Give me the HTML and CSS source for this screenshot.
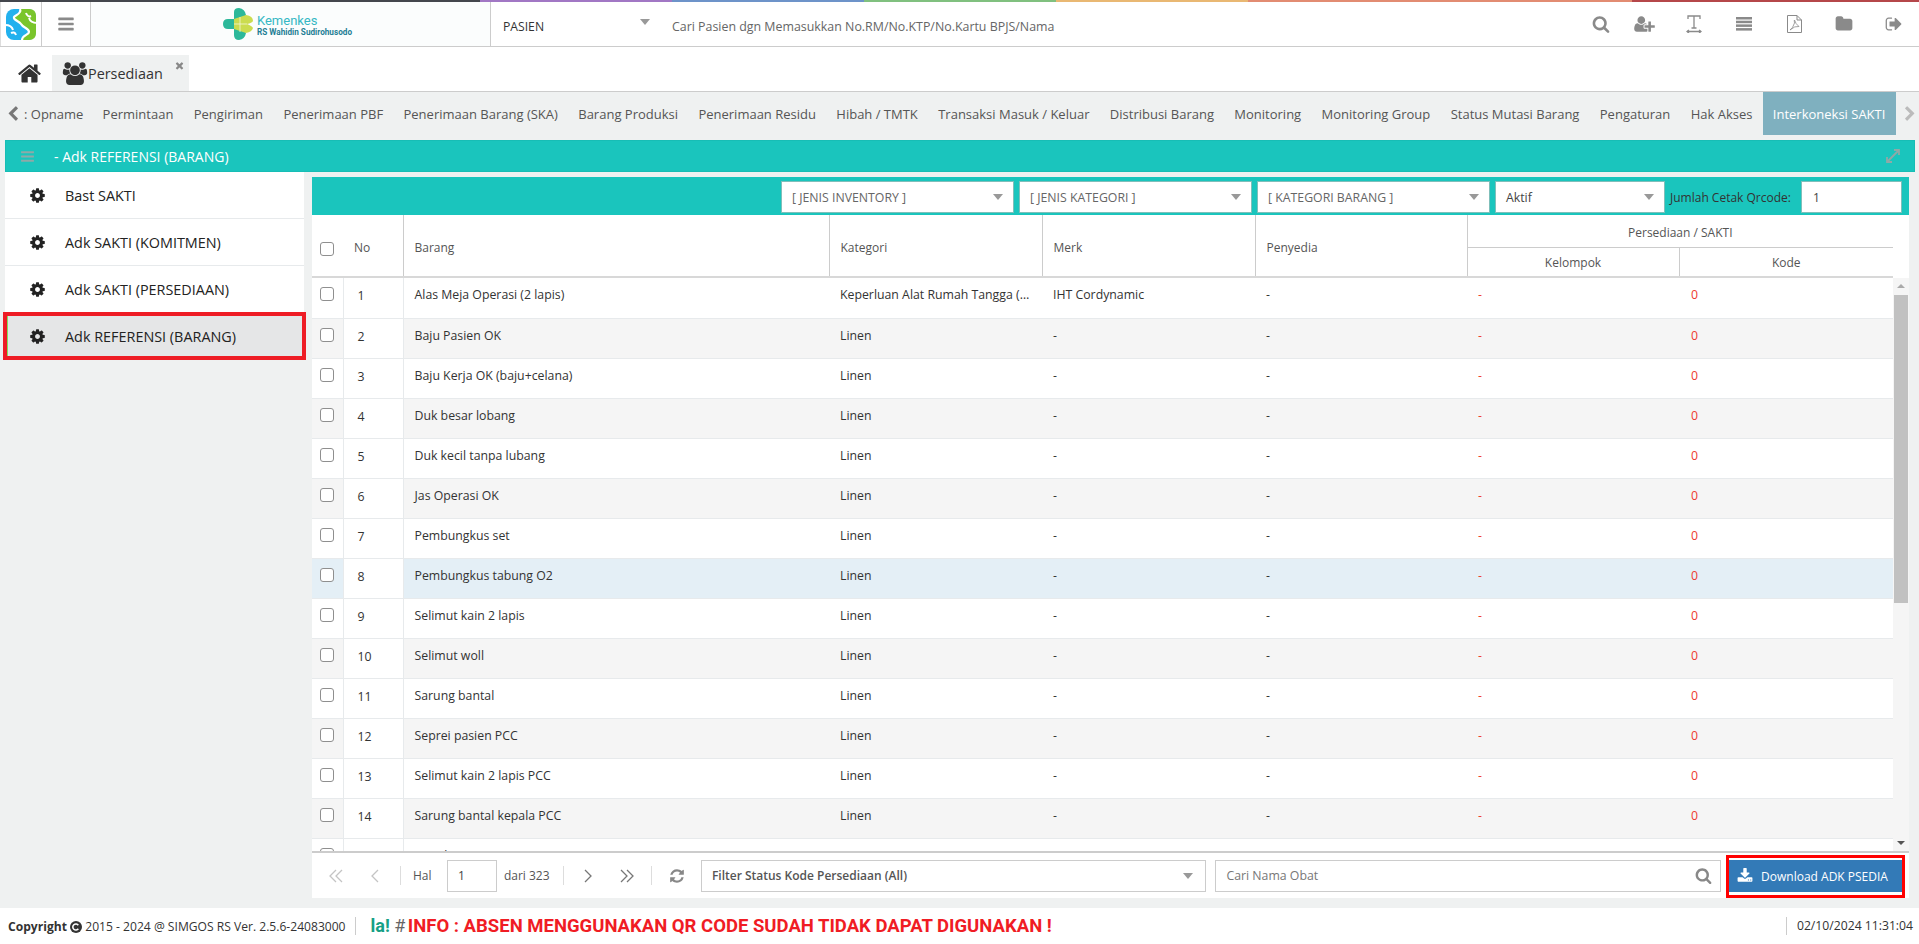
FILE: index.html
```html
<!DOCTYPE html>
<html lang="en">
<head>
    <meta charset="UTF-8">
    <title>SIMGOS RS - Persediaan</title>
    <link rel="stylesheet" href="styles.css">
</head>
<body>
    <svg class="icon_defs" xmlns="http://www.w3.org/2000/svg">
        <symbol id="i-bars" viewBox="0 0 1792 1792"><path d="M1664 1344v128q0 26-19 45t-45 19h-1408q-26 0-45-19t-19-45v-128q0-26 19-45t45-19h1408q26 0 45 19t19 45zm0-512v128q0 26-19 45t-45 19h-1408q-26 0-45-19t-19-45v-128q0-26 19-45t45-19h1408q26 0 45 19t19 45zm0-512v128q0 26-19 45t-45 19h-1408q-26 0-45-19t-19-45v-128q0-26 19-45t45-19h1408q26 0 45 19t19 45z"/></symbol>
        <symbol id="i-search" viewBox="0 0 1792 1792"><path d="M1216 832q0-185-131.500-316.500t-316.500-131.500-316.500 131.500-131.500 316.500 131.500 316.500 316.500 131.500 316.500-131.500 131.500-316.500zm512 832q0 52-38 90t-90 38q-54 0-90-38l-343-342q-179 124-399 124-143 0-273.500-55.500t-225-150-150-225-55.500-273.500 55.500-273.500 150-225 225-150 273.500-55.500 273.500 55.500 225 150 150 225 55.500 273.500q0 220-124 399l343 343q37 37 37 90z"/></symbol>
        <symbol id="i-home" viewBox="0 0 1792 1792"><path d="M1472 992v480q0 26-19 45t-45 19h-384v-384h-256v384h-384q-26 0-45-19t-19-45v-480q0-1 .5-3t.5-3l575-474 575 474q1 2 1 6zm223-69l-62 74q-8 9-21 11h-3q-13 0-21-7l-692-577-692 577q-12 8-24 7-13-2-21-11l-62-74q-8-10-7-23.500t11-21.500l719-599q32-26 76-26t76 26l244 204v-195q0-14 9-23t23-9h192q14 0 23 9t9 23v408l219 182q10 8 11 21.500t-7 23.500z"/></symbol>
        <symbol id="i-cog" viewBox="0 0 1792 1792"><path d="M1152 896q0-106-75-181t-181-75-181 75-75 181 75 181 181 75 181-75 75-181zm512-109v222q0 12-8 23t-20 13l-185 28q-19 54-39 91 35 50 107 138 10 12 10 25t-9 23q-27 37-99 108t-94 71q-12 0-26-9l-138-108q-44 23-91 38-16 136-29 186-7 28-36 28h-222q-14 0-24.500-8.500t-11.500-21.500l-28-184q-49-16-90-37l-141 107q-10 9-25 9-14 0-25-11-126-114-165-168-7-10-7-23 0-12 8-23 15-21 51-66.500t54-70.500q-27-50-41-99l-183-27q-13-2-21-12.500t-8-23.500v-222q0-12 8-23t19-13l186-28q14-46 39-92-40-57-107-138-10-12-10-24 0-10 9-23 26-36 98.500-107.500t94.500-71.500q13 0 26 10l138 107q44-23 91-38 16-136 29-186 7-28 36-28h222q14 0 24.500 8.500t11.500 21.500l28 184q49 16 90 37l142-107q9-9 24-9 13 0 25 10 129 119 165 170 7 8 7 22 0 12-8 23-15 21-51 66.500t-54 70.500q26 50 41 98l183 28q13 2 21 12.500t8 23.500z"/></symbol>
        <symbol id="i-users" viewBox="0 0 2048 1792"><path d="M657 896q-162 5-265 128h-134q-82 0-138-40.500t-56-118.500q0-353 124-353 6 0 43.500 21t97.500 42.500 119 21.500q67 0 133-23-5 37-5 66 0 139 81 256zm1071 637q0 120-73 189.500t-194 69.500h-874q-121 0-194-69.500t-73-189.500q0-53 3.500-103.500t14-109 26.500-108.500 43-97.500 62-81 85.500-53.500 111.500-20q10 0 43 21.500t73 48 107 48 135 21.500 135-21.500 107-48 73-48 43-21.500q61 0 111.500 20t85.500 53.500 62 81 43 97.500 26.500 108.500 14 109 3.500 103.500zm-1024-1277q0 106-75 181t-181 75-181-75-75-181 75-181 181-75 181 75 75 181zm704 384q0 159-112.500 271.500t-271.500 112.500-271.500-112.500-112.500-271.500 112.500-271.500 271.500-112.500 271.500 112.500 112.500 271.500zm576 225q0 78-56 118.500t-138 40.500h-134q-103-123-265-128 81-117 81-256 0-29-5-66 66 23 133 23 59 0 119-21.500t97.500-42.500 43.500-21q124 0 124 353zm-128-609q0 106-75 181t-181 75-181-75-75-181 75-181 181-75 181 75 75 181z"/></symbol>
        <symbol id="i-times" viewBox="0 0 1792 1792"><path d="M1490 1322q0 40-28 68l-136 136q-28 28-68 28t-68-28l-294-294-294 294q-28 28-68 28t-68-28l-136-136q-28-28-28-68t28-68l294-294-294-294q-28-28-28-68t28-68l136-136q28-28 68-28t68 28l294 294 294-294q28-28 68-28t68 28l136 136q28 28 28 68t-28 68l-294 294 294 294q28 28 28 68z"/></symbol>
        <symbol id="i-left" viewBox="0 0 1792 1792"><path d="M1427 301l-531 531 531 531q19 19 19 45t-19 45l-166 166q-19 19-45 19t-45-19l-742-742q-19-19-19-45t19-45l742-742q19-19 45-19t45 19l166 166q19 19 19 45t-19 45z"/></symbol>
        <symbol id="i-right" viewBox="0 0 1792 1792"><path d="M1363 877l-742 742q-19 19-45 19t-45-19l-166-166q-19-19-19-45t19-45l531-531-531-531q-19-19-19-45t19-45l166-166q19-19 45-19t45 19l742 742q19 19 19 45t-19 45z"/></symbol>
        <symbol id="i-signout" viewBox="0 0 1792 1792"><path d="M704 1440q0 4 1 20t.5 26.500-3 23.500-10 19.500-20.500 6.500h-320q-119 0-203.500-84.500t-84.500-203.500v-704q0-119 84.500-203.500t203.500-84.500h320q13 0 22.500 9.500t9.500 22.500q0 4 1 20t.5 26.500-3 23.500-10 19.500-20.500 6.500h-320q-66 0-113 47t-47 113v704q0 66 47 113t113 47h312l11.500 1 11.500 3 8 5.500 7 9 2 13.500zm928-544q0 26-19 45l-544 544q-19 19-45 19t-45-19-19-45v-288h-448q-26 0-45-19t-19-45v-384q0-26 19-45t45-19h448v-288q0-26 19-45t45-19 45 19l544 544q19 19 19 45z"/></symbol>
        <symbol id="i-folder" viewBox="0 0 1792 1792"><path d="M1728 608v704q0 92-66 158t-158 66h-1216q-92 0-158-66t-66-158v-960q0-92 66-158t158-66h320q92 0 158 66t66 158v32h672q92 0 158 66t66 158z"/></symbol>
        <symbol id="i-refresh" viewBox="0 0 1792 1792"><path d="M1639 1056q0 5-1 7-64 268-268 434.500t-478 166.500q-146 0-282.500-55t-243.500-157l-129 129q-19 19-45 19t-45-19-19-45v-448q0-26 19-45t45-19h448q26 0 45 19t19 45-19 45l-137 137q71 66 161 102t187 36q134 0 250-65t186-179q11-17 53-117 8-23 30-23h192q13 0 22.500 9.500t9.500 22.500zm25-800v448q0 26-19 45t-45 19h-448q-26 0-45-19t-19-45 19-45l138-138q-148-137-349-137-134 0-250 65t-186 179q-11 17-53 117-8 23-30 23h-199q-13 0-22.500-9.500t-9.500-22.500v-7q65-268 270-434.500t480-166.500q146 0 284 55.500t245 156.500l130-129q19-19 45-19t45 19 19 45z"/></symbol>
        <symbol id="i-download" viewBox="0 0 1792 1792"><path d="M1344 1344q0-26-19-45t-45-19-45 19-19 45 19 45 45 19 45-19 19-45zm256 0q0-26-19-45t-45-19-45 19-19 45 19 45 45 19 45-19 19-45zm128-224v320q0 40-28 68t-68 28h-1472q-40 0-68-28t-28-68v-320q0-40 28-68t68-28h465l135 136q58 56 136 56t136-56l136-136h464q40 0 68 28t28 68zm-325-569q17 41-14 70l-448 448q-18 19-45 19t-45-19l-448-448q-31-29-14-70 17-39 59-39h256v-448q0-26 19-45t45-19h256q26 0 45 19t19 45v448h256q42 0 59 39z"/></symbol>
        <symbol id="i-userplus" viewBox="0 0 2048 1792"><path d="M704 896q-159 0-271.500-112.500t-112.500-271.500 112.500-271.500 271.500-112.500 271.500 112.500 112.500 271.500-112.500 271.500-271.500 112.500zm960 128h352q13 0 22.500 9.500t9.500 22.500v192q0 13-9.500 22.500t-22.500 9.500h-352v352q0 13-9.500 22.500t-22.500 9.500h-192q-13 0-22.500-9.500t-9.500-22.500v-352h-352q-13 0-22.500-9.500t-9.500-22.500v-192q0-13 9.500-22.500t22.500-9.500h352v-352q0-13 9.500-22.500t22.500-9.500h192q13 0 22.500 9.500t9.500 22.500v352zm-736 224q0 52 38 90t90 38h256v238q-68 50-171 50h-874q-121 0-194-69t-73-190q0-53 3.500-103.500t14-109 26.500-108.500 43-97.500 62-81 85.500-53.500 111.500-20q19 0 39 17 79 61 154.500 91.500t164.500 30.500 164.500-30.500 154.500-91.500q20-17 39-17 132 0 217 96h-223q-52 0-90 38t-38 90v192z"/></symbol>
    </svg>

    <div class="top_stripe">
        <span class="st_dark"></span><span class="st_purple"></span><span class="st_blue"></span><span class="st_green"></span><span class="st_orange"></span><span class="st_salmon"></span><span class="st_red"></span>
    </div>

    <header class="app_header">
        <div class="hd_cell hd_brand">
            <svg width="32" height="33" viewBox="0 0 32 33" fill="none">
                <rect x="1" y="1" width="30" height="31" rx="8" fill="#22b1ee"/>
                <path d="M15 1 C17 6 10 7 9 9 C8 12 14 13 16 16 C18 20 24 20 24 24 C24 27 17 27 17 32 H24 Q31 32 31 25 V8 Q31 1 24 1 Z" fill="#7ac52b"/>
                <path d="M15 1 C17 6 10 7 9 9 C8 12 14 13 16 16 C18 20 24 20 24 24 C24 27 17 27 17 32" stroke="#fff" stroke-width="2.200"/>
                <path d="M0 17 C4 17 7 18 8 22 M32 15 C28 15 25 13 24 10 M21 5 C22 8 24 9 26 8 M11 27 C10 24 8 24 6 25" stroke="#fff" stroke-width="2"/>
            </svg>
        </div>
        <div class="hd_cell hd_menu"><svg class="ic ic_16"><use href="#i-bars"/></svg></div>
        <div class="hd_cell hd_logo">
            <svg width="30" height="32" viewBox="0 0 30 32">
                <path d="M0 16 Q0 11 5 11 H11 V21 H5 Q0 21 0 16 Z" fill="#2cb89a"/>
                <path d="M11 11 V4 Q11 0 16 0 Q22 1 23 7 L17 16 Z" fill="#2cb89a"/>
                <path d="M11 21 V27 Q11 32 16 32 Q22 31 23 25 L17 16 Z" fill="#2cb89a"/>
                <path d="M11 11 L23 7 Q30 8 30 13 Q29 15 24 16 Q29 18 30 20 Q29 24 23 25 L11 21 Z" fill="#cbdc4f"/>
                <path d="M11 16 H24 M17 9 V24" stroke="#f4f6d8" stroke-width="0.8"/>
            </svg>
            <div class="logo_text">
                <span class="logo_name">Kemenkes</span>
                <span class="logo_sub">RS Wahidin Sudirohusodo</span>
            </div>
        </div>
        <div class="hd_select"><span>PASIEN</span><i class="caret"></i></div>
        <div class="hd_search">Cari Pasien dgn Memasukkan No.RM/No.KTP/No.Kartu BPJS/Nama</div>
        <div class="hd_tool hd_tool_first"><svg class="ic ic_16"><use href="#i-search"/></svg></div>
        <div class="hd_tool"><svg class="ic ic_20"><use href="#i-userplus"/></svg></div>
        <div class="hd_tool">
            <svg width="16" height="18" viewBox="0 0 16 18" fill="none" stroke="#8a8a8a" stroke-width="1.3">
                <path d="M2 4 V1 H14 V4 M8 1 V13 M5.500 13 H10.500 M1 16.500 H15"/>
                <path d="M3 15 L1 16.500 L3 18 M13 15 L15 16.500 L13 18"/>
            </svg>
        </div>
        <div class="hd_tool">
            <svg width="16" height="14" viewBox="0 0 16 14" fill="#8a8a8a">
                <rect y="0" width="16" height="2.500"/><rect y="3.700" width="16" height="2.500"/><rect y="7.400" width="16" height="2.500"/><rect y="11.100" width="16" height="2.500"/>
            </svg>
        </div>
        <div class="hd_tool">
            <svg width="15" height="18" viewBox="0 0 15 18" fill="none" stroke="#8a8a8a">
                <path d="M.5 .5 H10 L14.500 5 V17.500 H.5 Z M10 .5 V5 H14.500"/>
                <path d="M3 15 Q6 13 7.500 8 Q7 5 7.500 5 Q8.500 9 12 11.500 Q8 10.500 3 15 Z" stroke-width="0.8"/>
            </svg>
        </div>
        <div class="hd_tool"><svg class="ic ic_16"><use href="#i-folder"/></svg></div>
        <div class="hd_tool"><svg class="ic ic_16"><use href="#i-signout"/></svg></div>
    </header>

    <div class="tab_row">
        <svg class="tab_home"><use href="#i-home"/></svg>
        <div class="tab_item">
            <svg class="tab_users"><use href="#i-users"/></svg>
            <span>Persediaan</span>
            <svg class="tab_close"><use href="#i-times"/></svg>
        </div>
    </div>

    <nav class="nav_row">
        <svg class="nav_arrow nav_arrow_l"><use href="#i-left"/></svg>
        <div class="nav_items">
            <a class="nav_first">: Opname</a>
            <a>Permintaan</a>
            <a>Pengiriman</a>
            <a>Penerimaan PBF</a>
            <a>Penerimaan Barang (SKA)</a>
            <a>Barang Produksi</a>
            <a>Penerimaan Residu</a>
            <a>Hibah / TMTK</a>
            <a>Transaksi Masuk / Keluar</a>
            <a>Distribusi Barang</a>
            <a>Monitoring</a>
            <a>Monitoring Group</a>
            <a>Status Mutasi Barang</a>
            <a>Pengaturan</a>
            <a>Hak Akses</a>
            <a class="active">Interkoneksi SAKTI</a>
        </div>
        <svg class="nav_arrow nav_arrow_r"><use href="#i-right"/></svg>
    </nav>

    <div class="panel_bar">
        <svg class="bar_menu"><use href="#i-bars"/></svg>
        <span class="bar_title">- Adk REFERENSI (BARANG)</span>
        <svg class="bar_expand" viewBox="0 0 16 16" fill="none" stroke="#8fa9a7" stroke-width="1.800">
            <path d="M2 14 L14 2 M9 2 H14 V7 M2 9 V14 H7"/>
        </svg>
    </div>

    <main class="content">
        <aside class="side_menu">
            <a class="side_item"><svg><use href="#i-cog"/></svg>Bast SAKTI</a>
            <a class="side_item"><svg><use href="#i-cog"/></svg>Adk SAKTI (KOMITMEN)</a>
            <a class="side_item"><svg><use href="#i-cog"/></svg>Adk SAKTI (PERSEDIAAN)</a>
            <a class="side_item selected"><svg><use href="#i-cog"/></svg>Adk REFERENSI (BARANG)</a>
        </aside>

        <section class="panel">
            <div class="filter_bar">
                <div class="filter_sel"><span>[ JENIS INVENTORY ]</span><i class="caret"></i></div>
                <div class="filter_sel"><span>[ JENIS KATEGORI ]</span><i class="caret"></i></div>
                <div class="filter_sel"><span>[ KATEGORI BARANG ]</span><i class="caret"></i></div>
                <div class="filter_sel filter_aktif"><span>Aktif</span><i class="caret"></i></div>
                <label class="filter_label">Jumlah Cetak Qrcode:</label>
                <div class="filter_num">1</div>
            </div>

            <table class="grid grid_head">
                <colgroup>
                    <col class="c_check"><col class="c_no"><col class="c_barang"><col class="c_kat"><col class="c_merk"><col class="c_pen"><col class="c_kel"><col class="c_kode">
                </colgroup>
                <thead>
                    <tr>
                        <th rowspan="2" colspan="2" class="th_no"><i class="check"></i><span>No</span></th>
                        <th rowspan="2">Barang</th>
                        <th rowspan="2">Kategori</th>
                        <th rowspan="2">Merk</th>
                        <th rowspan="2">Penyedia</th>
                        <th colspan="2" class="th_center th_group">Persediaan / SAKTI</th>
                    </tr>
                    <tr>
                        <th class="th_center">Kelompok</th>
                        <th class="th_center th_last">Kode</th>
                    </tr>
                </thead>
            </table>

            <div class="grid_wrap">
                <div class="grid_scroll">
                    <table class="grid grid_body">
                        <colgroup>
                            <col class="c_check"><col class="c_no"><col class="c_barang"><col class="c_kat"><col class="c_merk"><col class="c_pen"><col class="c_kel"><col class="c_kode">
                        </colgroup>
                        <tbody>
                            <tr><td class="td_check"><i class="check"></i></td><td class="td_no">1</td><td>Alas Meja Operasi (2 lapis)</td><td>Keperluan Alat Rumah Tangga (Linen)</td><td>IHT Cordynamic</td><td>-</td><td class="red">-</td><td class="red">0</td></tr>
                            <tr><td class="td_check"><i class="check"></i></td><td class="td_no">2</td><td>Baju Pasien OK</td><td>Linen</td><td>-</td><td>-</td><td class="red">-</td><td class="red">0</td></tr>
                            <tr><td class="td_check"><i class="check"></i></td><td class="td_no">3</td><td>Baju Kerja OK (baju+celana)</td><td>Linen</td><td>-</td><td>-</td><td class="red">-</td><td class="red">0</td></tr>
                            <tr><td class="td_check"><i class="check"></i></td><td class="td_no">4</td><td>Duk besar lobang</td><td>Linen</td><td>-</td><td>-</td><td class="red">-</td><td class="red">0</td></tr>
                            <tr><td class="td_check"><i class="check"></i></td><td class="td_no">5</td><td>Duk kecil tanpa lubang</td><td>Linen</td><td>-</td><td>-</td><td class="red">-</td><td class="red">0</td></tr>
                            <tr><td class="td_check"><i class="check"></i></td><td class="td_no">6</td><td>Jas Operasi OK</td><td>Linen</td><td>-</td><td>-</td><td class="red">-</td><td class="red">0</td></tr>
                            <tr><td class="td_check"><i class="check"></i></td><td class="td_no">7</td><td>Pembungkus set</td><td>Linen</td><td>-</td><td>-</td><td class="red">-</td><td class="red">0</td></tr>
                            <tr class="row_hover"><td class="td_check"><i class="check"></i></td><td class="td_no">8</td><td>Pembungkus tabung O2</td><td>Linen</td><td>-</td><td>-</td><td class="red">-</td><td class="red">0</td></tr>
                            <tr><td class="td_check"><i class="check"></i></td><td class="td_no">9</td><td>Selimut kain 2 lapis</td><td>Linen</td><td>-</td><td>-</td><td class="red">-</td><td class="red">0</td></tr>
                            <tr><td class="td_check"><i class="check"></i></td><td class="td_no">10</td><td>Selimut woll</td><td>Linen</td><td>-</td><td>-</td><td class="red">-</td><td class="red">0</td></tr>
                            <tr><td class="td_check"><i class="check"></i></td><td class="td_no">11</td><td>Sarung bantal</td><td>Linen</td><td>-</td><td>-</td><td class="red">-</td><td class="red">0</td></tr>
                            <tr><td class="td_check"><i class="check"></i></td><td class="td_no">12</td><td>Seprei pasien PCC</td><td>Linen</td><td>-</td><td>-</td><td class="red">-</td><td class="red">0</td></tr>
                            <tr><td class="td_check"><i class="check"></i></td><td class="td_no">13</td><td>Selimut kain 2 lapis PCC</td><td>Linen</td><td>-</td><td>-</td><td class="red">-</td><td class="red">0</td></tr>
                            <tr><td class="td_check"><i class="check"></i></td><td class="td_no">14</td><td>Sarung bantal kepala PCC</td><td>Linen</td><td>-</td><td>-</td><td class="red">-</td><td class="red">0</td></tr>
                            <tr><td class="td_check"><i class="check"></i></td><td class="td_no">15</td><td>Switching PCC</td><td>Linen</td><td>-</td><td>-</td><td class="red">-</td><td class="red">0</td></tr>
                        </tbody>
                    </table>
                </div>
                <div class="scrollbar">
                    <i class="sb_up"></i>
                    <div class="sb_track"><div class="sb_thumb"></div></div>
                    <i class="sb_down"></i>
                </div>
            </div>

            <div class="pager">
                <svg class="pg_btn pg_off" viewBox="0 0 16 16"><path d="M8 2 L2 8 L8 14 M14 2 L8 8 L14 14"/></svg>
                <svg class="pg_btn pg_off" viewBox="0 0 16 16"><path d="M10 2 L4 8 L10 14"/></svg>
                <span class="pg_sep"></span>
                <span class="pg_text pg_hal">Hal</span>
                <div class="pg_input">1</div>
                <span class="pg_text pg_dari">dari 323</span>
                <span class="pg_sep pg_sep_mid"></span>
                <svg class="pg_btn" viewBox="0 0 16 16"><path d="M6 2 L12 8 L6 14"/></svg>
                <svg class="pg_btn" viewBox="0 0 16 16"><path d="M2 2 L8 8 L2 14 M8 2 L14 8 L8 14"/></svg>
                <span class="pg_sep"></span>
                <svg class="pg_refresh"><use href="#i-refresh"/></svg>
                <div class="pg_select"><span>Filter Status Kode Persediaan (All)</span><i class="caret"></i></div>
                <div class="pg_search"><span>Cari Nama Obat</span><svg><use href="#i-search"/></svg></div>
                <div class="dl_wrap">
                    <button class="dl_btn"><svg><use href="#i-download"/></svg>Download ADK PSEDIA</button>
                </div>
            </div>
        </section>
    </main>

    <footer class="app_footer">
        <span class="ft_copy"><b>Copyright</b>
            <svg width="12" height="12" viewBox="0 0 12 12"><circle cx="6" cy="6" r="6" fill="#333"/><path d="M8.300 4.300 A3 3 0 1 0 8.300 7.700" fill="none" stroke="#fff" stroke-width="1.600"/></svg>
            2015 - 2024 @ SIMGOS RS Ver. 2.5.6-24083000</span>
        <span class="ft_sep"></span>
        <div class="ft_info"><span class="ft_la">la!</span> <span class="ft_hash">#</span> <span class="ft_msg">INFO : ABSEN MENGGUNAKAN QR CODE SUDAH TIDAK DAPAT DIGUNAKAN !</span></div>
        <span class="ft_date">02/10/2024 11:31:04</span>
    </footer>
</body>
</html>
```

FILE: styles.css
```css
* {
    padding: 0;
    margin: 0;
    box-sizing: border-box;
    font-family: 'Open Sans', 'Noto Sans', sans-serif;
}
body {
    width: 1919px;
    height: 944px;
    display: flex;
    flex-direction: column;
    overflow: hidden;
    background: #eff1f1;
    color: #333;
    font-size: 12px;
}
.icon_defs {
    display: none;
}
.caret {
    display: block;
    width: 0;
    height: 0;
    border-left: 5px solid transparent;
    border-right: 5px solid transparent;
    border-top: 6px solid #999;
}

/* top bar */
.top_stripe {
    display: flex;
    height: 2px;
}
.top_stripe span {
    display: block;
    height: 2px;
}
.st_dark { width: 480px; background: #44474d; }
.st_purple { width: 192px; background: #a177c4; }
.st_blue { width: 192px; background: #6d93c9; }
.st_green { width: 192px; background: #80c07f; }
.st_orange { width: 192px; background: #e9b873; }
.st_salmon { width: 384px; background: #e28c72; }
.st_red { flex: 1; background: #b5474a; }

.app_header {
    display: flex;
    height: 45px;
    background: #fff;
    border-bottom: 1px solid #ccc;
}
.hd_cell {
    display: flex;
    align-items: center;
    justify-content: center;
    border-right: 1px solid #ccc;
}
.hd_brand { width: 42px; border-left: 1px solid #ddd; }
.hd_menu { width: 49px; }
.hd_logo {
    width: 400px;
    gap: 4px;
    background: #fbfdfd;
    padding-right: 6px;
}
.logo_text {
    display: flex;
    flex-direction: column;
    padding-top: 3px;
}
.logo_name {
    font-family: Roboto, sans-serif;
    font-size: 13px;
    line-height: 12px;
    color: #35b8c4;
}
.logo_sub {
    font-family: Roboto, sans-serif;
    font-size: 8.200px;
    line-height: 10px;
    font-weight: 700;
    color: #1f7f95;
}
.hd_select {
    width: 169px;
    display: flex;
    align-items: center;
    justify-content: space-between;
    padding: 4px 10px 0 12px;
    font-size: 12.200px;
    color: #333;
}
.hd_select .caret { margin-top: -8px; }
.hd_search {
    flex: 1;
    display: flex;
    align-items: center;
    padding: 4px 0 0 12px;
    font-size: 12.400px;
    color: #666;
}
.hd_tool {
    width: 50px;
    display: flex;
    align-items: center;
    justify-content: center;
    padding-bottom: 1px;
}
.hd_tool_first { width: 36px; }
.ic { fill: #8a8a8a; }
.ic_16 { width: 18px; height: 18px; }
.ic_20 { width: 21px; height: 18px; }

/* tabs */
.tab_row {
    display: flex;
    align-items: flex-end;
    height: 45px;
    padding-left: 17px;
    background: #fff;
    border-bottom: 1px solid #ccc;
}
.tab_home {
    width: 25px;
    height: 25px;
    fill: #333;
    margin: 0 10px 5px 0;
}
.tab_item {
    width: 137px;
    height: 36px;
    display: flex;
    align-items: center;
    padding: 0 0 0 10px;
    background: #eff1f1;
    font-size: 14.400px;
    color: #333;
    position: relative;
}
.tab_users {
    width: 26px;
    height: 23px;
    fill: #333;
}
.tab_close {
    position: absolute;
    top: 5px;
    right: 4px;
    width: 11px;
    height: 11px;
    fill: #888;
}

/* horizontal menu */
.nav_row {
    display: flex;
    height: 48px;
    background: #eff1f1;
    position: relative;
}
.nav_arrow {
    width: 16px;
    height: 16px;
    margin-top: 14px;
}
.nav_arrow_l { fill: #777; margin-left: 5px; }
.nav_arrow_r { fill: #bbb; margin-left: 6px; }
.nav_items {
    width: 1875px;
    height: 43px;
    display: flex;
    overflow: hidden;
}
.nav_items a {
    display: flex;
    align-items: center;
    flex-shrink: 0;
    padding: 0 10.200px;
    font-size: 13px;
    color: #555;
    white-space: nowrap;
}
.nav_items .nav_first { padding: 0 9px 0 3px; }
.nav_items .active {
    background: #7fb0bf;
    color: #fff;
}

.panel_bar {
    height: 32px;
    margin: 0 4px 0 5px;
    display: flex;
    align-items: center;
    padding: 0 13px 0 14px;
    background: #1ac5bd;
    border: 1px solid #17bdb5;
}
.bar_menu {
    width: 15px;
    height: 15px;
    fill: #8fa9a7;
}
.bar_title {
    flex: 1;
    margin-left: 19px;
    font-size: 14px;
    color: #fff;
}
.bar_expand {
    width: 16px;
    height: 16px;
}

/* content */
.content {
    flex: 1;
    display: flex;
    min-height: 0;
    padding: 0 10px 0 5px;
    gap: 8px;
}
.side_menu {
    width: 299px;
    display: flex;
    flex-direction: column;
}
.side_item {
    height: 47px;
    display: flex;
    align-items: center;
    gap: 19px;
    padding: 0 0 0 24px;
    background: #fff;
    border-bottom: 1px solid #e7eaec;
    font-size: 14.400px;
    color: #222;
}
.side_item svg {
    width: 17px;
    height: 17px;
    fill: #222;
}
.side_item.selected {
    height: 44px;
    margin-top: 1px;
    padding-left: 21px;
    background: #e5e6e7;
    border-bottom: none;
    border-left: 3px solid #7fe060;
    position: relative;
}
.side_item.selected::after {
    content: "";
    position: absolute;
    top: -2px;
    left: -5px;
    right: -2px;
    bottom: -2px;
    border: 4px solid #ee1c25;
}

.panel {
    flex: 1;
    display: flex;
    flex-direction: column;
    margin: 5px 0 10px;
    min-width: 0;
    background: #fff;
}
.filter_bar {
    height: 38px;
    display: flex;
    align-items: center;
    justify-content: flex-end;
    gap: 5px;
    padding: 2px 7px 0 0;
    background: #1ac5bd;
}
.filter_sel {
    width: 233px;
    height: 32px;
    display: flex;
    align-items: center;
    justify-content: space-between;
    padding: 0 10px 0 10px;
    background: #fff;
    border: 1px solid #7fbfba;
    font-size: 12.300px;
    color: #666;
}
.filter_aktif { width: 170px; color: #444; }
.filter_label {
    width: 126px;
    color: #333;
    white-space: nowrap;
}
.filter_num {
    width: 101px;
    height: 32px;
    display: flex;
    align-items: center;
    padding-left: 11px;
    background: #fff;
    border: 1px solid #7fbfba;
    color: #444;
}

/* grid */
.grid {
    table-layout: fixed;
    width: 1581px;
    border-collapse: collapse;
}
.c_check { width: 31px; }
.c_no { width: 60px; }
.c_barang { width: 426px; }
.c_kat { width: 213px; }
.c_merk { width: 213px; }
.c_pen { width: 212px; }
.c_kel { width: 212px; }
.c_kode { width: 214px; }
.grid_head {
    flex-shrink: 0;
    height: 63px;
    border-bottom: 2px solid #d8d8d8;
}
.grid_head th {
    padding: 2px 11px 0;
    font-weight: 400;
    text-align: left;
    color: #555;
    border-right: 1px solid #ccc;
}
.grid_head th[rowspan] { padding-top: 4px; }
.grid_head .th_center { text-align: center; }
.grid_head .th_group { height: 32px; padding-top: 3px; border-bottom: 1px solid #ccc; border-right: none; }
.grid_head .th_last { border-right: none; }
.th_no .check {
    margin: 0 20px 0 -3px;
    vertical-align: middle;
}
.check {
    display: inline-block;
    width: 14px;
    height: 14px;
    background: #fff;
    border: 1px solid #8f8f8f;
    border-radius: 3px;
}
.grid_wrap {
    flex: 1;
    display: flex;
    min-height: 0;
}
.grid_scroll {
    width: 1581px;
    overflow: hidden;
}
.grid_body tr { height: 40px; }
.grid_body tr:nth-child(even) td { background: #f5f5f5; }
.grid_body tr.row_hover td { background: #e4eff6; }
.grid_body td {
    padding: 8px 11px 0;
    line-height: 17px;
    vertical-align: top;
    font-size: 12.300px;
    color: #333;
    white-space: nowrap;
    overflow: hidden;
    text-overflow: ellipsis;
    border-bottom: 1px solid #e7eaec;
}
.grid_body .td_check {
    padding: 9px 0 0 8px;
    line-height: 13px;
    border-right: 1px solid #e7eaec;
}
.grid_body td.td_no,
.grid_body tr:nth-child(even) td.td_no,
.grid_body tr.row_hover td.td_no {
    padding: 9px 0 0 14px;
    background: #fff;
    border-right: 1px solid #e7eaec;
}
.grid_body td:last-child { padding-left: 12px; }
.grid_body .red { color: #ee3b30; }
.scrollbar {
    width: 16px;
    display: flex;
    flex-direction: column;
    align-items: center;
    background: #f5f5f5;
}
.sb_up, .sb_down {
    display: block;
    width: 0;
    height: 0;
    border-left: 4px solid transparent;
    border-right: 4px solid transparent;
    margin: 6px 0;
}
.sb_up { border-bottom: 4px solid #aaa; }
.sb_down { border-top: 4px solid #555; }
.sb_track {
    flex: 1;
    width: 100%;
}
.sb_thumb {
    height: 308px;
    background: #c1c1c1;
    margin: 1px 1px 0;
}

/* pager */
.pager {
    flex-shrink: 0;
    height: 47px;
    display: flex;
    align-items: center;
    padding: 0 4px 0 4px;
    border-top: 2px solid #ccc;
    color: #555;
}
.pg_btn {
    width: 40px;
    height: 16px;
    flex-shrink: 0;
    fill: none;
    stroke: #777;
    stroke-width: 1.300;
}
.pg_off { stroke: #c4c4c4; }
.pg_sep {
    width: 1px;
    height: 19px;
    flex-shrink: 0;
    margin-left: 4px;
    background: #ddd;
}
.pg_sep_mid { margin: 0 3px 0 0; }
.pg_text { color: #555; white-space: nowrap; }
.pg_hal { width: 34px; margin-left: 12px; }
.pg_dari { width: 59px; margin-left: 7px; }
.pg_input {
    width: 50px;
    height: 32px;
    display: flex;
    align-items: center;
    padding-left: 10px;
    border: 1px solid #ccc;
    color: #444;
}
.pg_refresh {
    width: 16px;
    height: 16px;
    flex-shrink: 0;
    margin: 0 16px 0 17px;
    fill: #888;
}
.pg_select {
    width: 506px;
    height: 32px;
    display: flex;
    align-items: center;
    justify-content: space-between;
    padding: 0 12px 0 10px;
    border: 1px solid #ccc;
    color: #555;
    font-weight: 600;
}
.pg_search {
    width: 506px;
    height: 32px;
    margin-left: 9px;
    display: flex;
    align-items: center;
    justify-content: space-between;
    padding: 0 8px 0 10px;
    border: 1px solid #ccc;
    font-size: 12.300px;
    color: #777;
}
.pg_search svg {
    width: 17px;
    height: 17px;
    fill: #888;
}
.dl_wrap {
    width: 179px;
    height: 43px;
    flex-shrink: 0;
    align-self: flex-end;
    margin-left: 5px;
    padding-top: 2px;
    border: 3px solid #f00;
}
.dl_btn {
    width: 100%;
    height: 32px;
    display: flex;
    align-items: center;
    justify-content: center;
    gap: 8px;
    padding-right: 6px;
    background: #337ab7;
    border: none;
    color: #fff;
    font-size: 12px;
}
.dl_btn svg {
    width: 16px;
    height: 16px;
    fill: #fff;
}

/* footer */
.app_footer {
    height: 36px;
    flex-shrink: 0;
    display: flex;
    align-items: center;
    padding: 0 6px 0 8px;
    background: #fff;
    white-space: nowrap;
}
.ft_copy { font-size: 12.100px; color: #333; }
.ft_copy b { font-weight: 700; }
.ft_copy svg { vertical-align: -2px; }
.ft_sep {
    width: 1px;
    height: 18px;
    margin: 0 15px 0 9px;
    background: #ccc;
}
.ft_info {
    flex: 1;
    font-size: 18px;
    font-family: Roboto, sans-serif;
}
.ft_info span { font-family: Roboto, sans-serif; }
.ft_la { color: #16a085; font-weight: 700; }
.ft_hash { color: #666; }
.ft_msg { margin-left: -2px; font-size: 18.500px; color: #f01c24; font-weight: 700; }
.ft_date {
    padding-left: 10px;
    line-height: 18px;
    font-size: 12.200px;
    border-left: 1px solid #ccc;
    color: #333;
}
```
